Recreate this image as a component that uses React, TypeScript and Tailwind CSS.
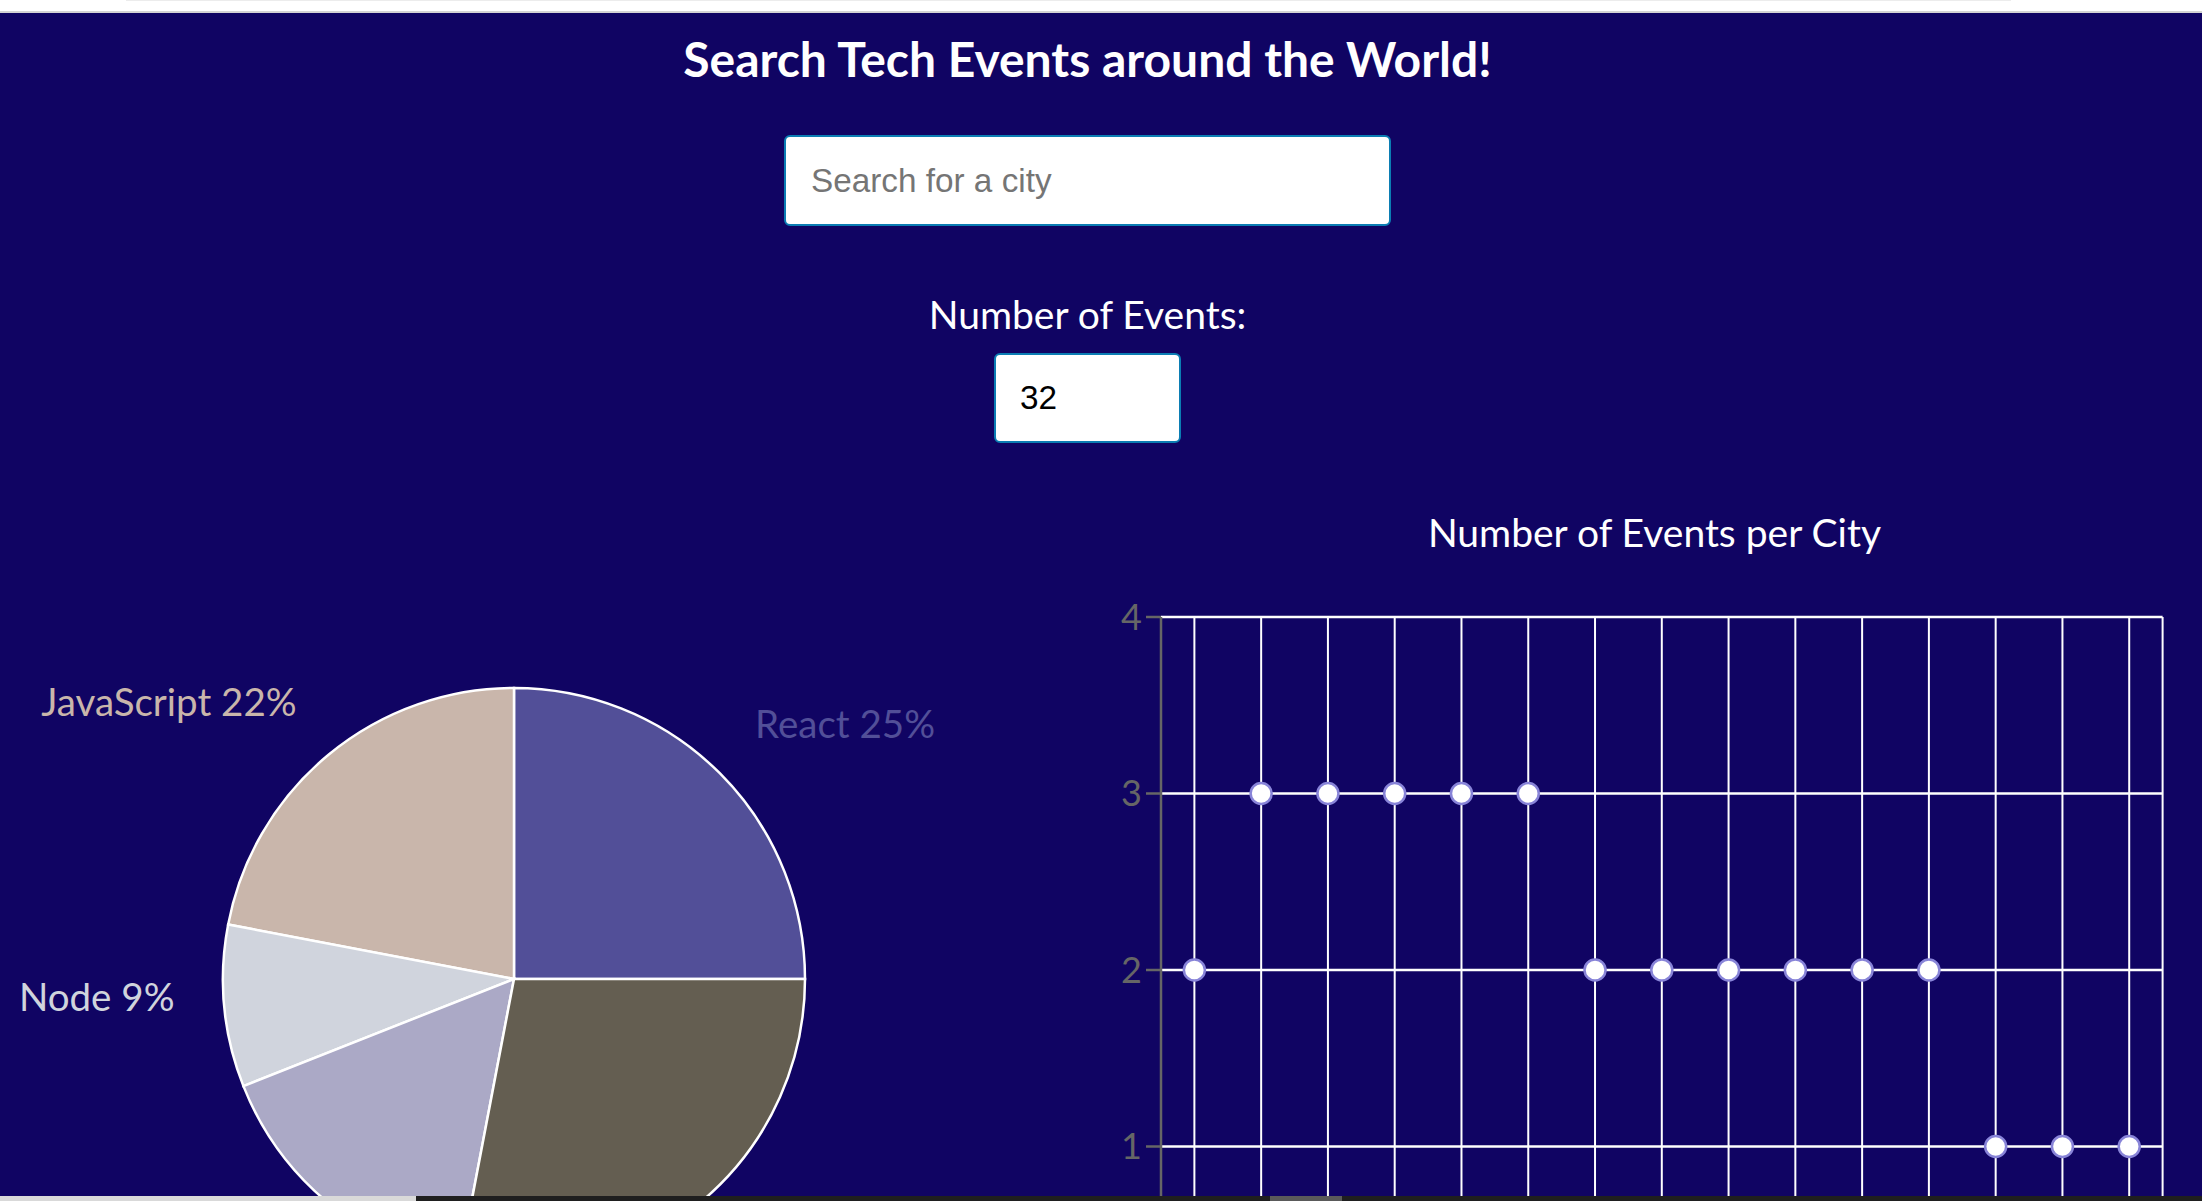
const genres = [
  { name: "React", value: 25, color: "#524f98" },
  { name: "JavaScript", value: 22, color: "#c9b6ab" },
  { name: "Node", value: 9, color: "#d0d4dd" },
  { name: "jQuery", value: 16, color: "#aba9c6" },
  { name: "AngularJS", value: 28, color: "#645e51" },
];

const cityCounts = [2, 3, 3, 3, 3, 3, 2, 2, 2, 2, 2, 2, 1, 1, 1];

function polar(cx: number, cy: number, r: number, deg: number) {
  const a = (deg * Math.PI) / 180;
  return [cx + r * Math.cos(a), cy - r * Math.sin(a)];
}

function GenrePie() {
  const cx = 514;
  const cy = 499;
  const r = 291;
  let start = 0;
  const slices = genres.map((g) => {
    const end = start + (g.value / 100) * 360;
    const [x0, y0] = polar(cx, cy, r, start);
    const [x1, y1] = polar(cx, cy, r, end);
    const mid = (start + end) / 2;
    const [lx, ly] = polar(cx, cy, r + 50, mid);
    const large = end - start > 180 ? 1 : 0;
    const d = `M${cx},${cy} L${x0},${y0} A${r},${r} 0 ${large} 0 ${x1},${y1} Z`;
    start = end;
    return { ...g, d, lx, ly, anchor: Math.cos((mid * Math.PI) / 180) >= 0 ? "start" : "end" };
  });

  // only labels that sit inside the visible area
  const labels = slices.filter((s) => s.ly < 700);

  return (
    <svg width="1101" height="721" className="block">
      {slices.map((s) => (
        <path key={s.name} d={s.d} fill={s.color} stroke="#ffffff" strokeWidth="2.5" />
      ))}
      {labels.map((s) => (
        <text
          key={s.name + "-label"}
          x={s.lx}
          y={s.ly}
          fill={s.color}
          textAnchor={s.anchor}
          fontFamily="Lato, sans-serif"
          fontSize="38.5"
        >
          {s.name} {s.value}%
        </text>
      ))}
    </svg>
  );
}

function CityScatter() {
  const left = 60;
  const right = 1061.6;
  const top = 57;
  const unit = 176.5;
  const height = 641;
  const band = (right - left) / cityCounts.length;
  const yFor = (v: number) => top + (4 - v) * unit;

  return (
    <svg width="1101" height={height} className="block">
      {[4, 3, 2, 1].map((v) => (
        <line key={v} x1={left} x2={right} y1={yFor(v)} y2={yFor(v)} stroke="#ffffff" strokeWidth="2.5" />
      ))}
      {cityCounts.map((_, i) => (
        <line
          key={i}
          x1={left + band * (i + 0.5)}
          x2={left + band * (i + 0.5)}
          y1={top}
          y2={height}
          stroke="#ffffff"
          strokeWidth="2"
        />
      ))}
      <line x1={right} x2={right} y1={top} y2={height} stroke="#ffffff" strokeWidth="2" />
      <line x1={left} x2={left} y1={top} y2={height} stroke="#666666" strokeWidth="2.5" />
      {[4, 3, 2, 1].map((v) => (
        <g key={"t" + v}>
          <line x1={left - 15} x2={left} y1={yFor(v)} y2={yFor(v)} stroke="#666666" strokeWidth="2.5" />
          <text
            x={left - 19}
            y={yFor(v)}
            dy="0.36em"
            textAnchor="end"
            fill="#666666"
            fontFamily="Lato, sans-serif"
            fontSize="36"
          >
            {v}
          </text>
        </g>
      ))}
      {cityCounts.map((v, i) => (
        <circle
          key={"c" + i}
          cx={left + band * (i + 0.5)}
          cy={yFor(v)}
          r="10.5"
          fill="#ffffff"
          stroke="#8884d8"
          strokeWidth="2.5"
        />
      ))}
    </svg>
  );
}

export default function App() {
  return (
    <div className="flex h-[1201px] w-[2202px] flex-col overflow-hidden bg-[#100463] font-['Lato',sans-serif]">
      <div className="h-[13px] shrink-0 border-b-2 border-[#d4d4d4] bg-white">
        <div className="ml-[126px] mr-[191px] h-px bg-[#ececec]" />
      </div>

      <div className="min-h-0 flex-1">
        <div className="flex w-[2175px] flex-col items-center">
          <h1 className="mt-[17px] text-[48px] font-bold leading-[58px] text-white">
            Search Tech Events around the World!
          </h1>
          <input
            type="text"
            placeholder="Search for a city"
            className="mt-[47px] h-[91px] w-[607px] rounded-[6px] border-2 border-[#0b7db3] bg-white pl-[25px] font-['Liberation_Sans',Arial,sans-serif] text-[33.3px] text-black outline-none placeholder:text-[#757575]"
          />
          <p className="mt-[64px] text-[39px] leading-[48px] text-white">Number of Events:</p>
          <input
            type="number"
            defaultValue={32}
            className="mt-[15px] h-[90px] w-[187px] rounded-[6px] border-2 border-[#0b7db3] bg-white pl-[24px] font-['Liberation_Sans',Arial,sans-serif] text-[33.3px] text-black outline-none [appearance:textfield] [&::-webkit-inner-spin-button]:appearance-none"
          />
        </div>

        <div className="mt-[37px] grid grid-cols-[1101px_1101px]">
          <div>
            <GenrePie />
          </div>
          <div className="flex flex-col">
            <h4 className="mt-[27px] pl-[6px] text-center text-[39px] leading-[50px] text-white">
              Number of Events per City
            </h4>
            <div className="mt-[3px]">
              <CityScatter />
            </div>
          </div>
        </div>
      </div>

      <div className="flex h-[5px] shrink-0">
        <div className="w-[416px] bg-[#d9d9d9]" />
        <div className="w-[854px] bg-[#1f1f1f]" />
        <div className="w-[72px] bg-[#5a5a5a]" />
        <div className="flex-1 bg-[#1f1f1f]" />
      </div>
    </div>
  );
}
